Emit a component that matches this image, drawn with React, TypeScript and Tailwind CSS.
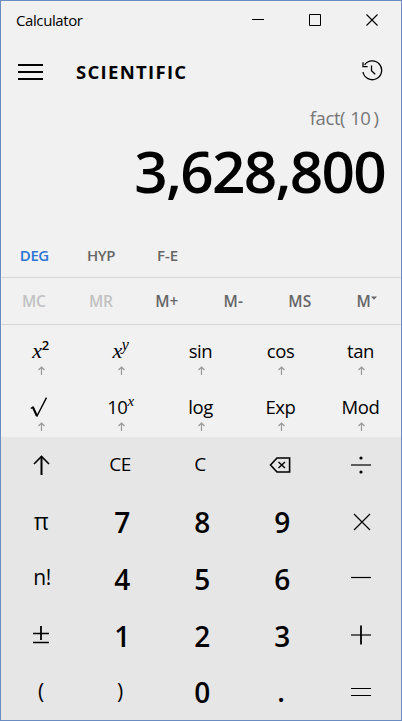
import React from "react";

type IconProps = { children: React.ReactNode; w?: number; h?: number; sw?: number; className?: string };

function Icon({ children, w = 24, h = 24, sw = 1.2, className = "" }: IconProps) {
  return (
    <svg width={w} height={h} viewBox={`0 0 ${w} ${h}`} fill="none" stroke="currentColor" strokeWidth={sw} className={`block shrink-0 ${className}`}>
      {children}
    </svg>
  );
}

function Key({ children, className = "" }: { children: React.ReactNode; className?: string }) {
  return (
    <button className={`flex h-full w-full items-center justify-center whitespace-nowrap ${className}`}>
      {children}
    </button>
  );
}

function FnKey({ children }: { children: React.ReactNode }) {
  return (
    <button className="flex h-full w-full flex-col items-center">
      <span className="flex h-[38px] w-full items-center justify-center pr-[1px] pt-[14px] text-[18.5px] leading-none tracking-[-0.4px]">
        {children}
      </span>
      <Icon w={8} h={9} sw={1.2} className="mt-[3px] text-[#999]">
        <path d="M4.5 9V1M1.5 4 4.5 1 7.5 4" />
      </Icon>
    </button>
  );
}

function Digit({ children }: { children: string }) {
  return <Key className="pl-[2px] pt-[1px] text-[28px] font-semibold">{children}</Key>;
}

const serif = "font-['Liberation_Serif',serif] italic";

export default function App() {
  return (
    <div className="flex h-[721px] w-[402px] flex-col overflow-hidden border border-[#6a8cc0] bg-[#f1f1f1] font-['Open_Sans',sans-serif] text-black">
      <div className="flex h-[38px] shrink-0 items-center justify-between pl-[15px]">
        <span className="pt-[1px] text-[15px] tracking-[-0.4px]">Calculator</span>
        <div className="flex">
          <Icon w={57} h={38} sw={1}><path d="M22 18.5h12" /></Icon>
          <Icon w={57} h={38} sw={1}><path d="M22.5 13.5h11v11h-11z" /></Icon>
          <Icon w={57} h={38} sw={1.1}><path d="m22.5 13.5 11 11m0-11-11 11" /></Icon>
        </div>
      </div>

      <div className="flex h-[66px] shrink-0 items-center pl-[17px] pr-[18px]">
        <Icon w={25} h={18} sw={2}><path d="M0 2h25M0 9h25M0 16h25" /></Icon>
        <h1 className="ml-[33px] text-[18.5px] font-bold tracking-[1.3px]">SCIENTIFIC</h1>
        <Icon w={22} h={22} sw={1.3} className="-mt-[4px] ml-auto">
          <path d="M2 13A9.4 9.4 0 1 0 3.6 5.8M2 3.2v4.4h4.6M10.5 6.5v5.3l3.7 3.4" />
        </Icon>
      </div>

      <div className="flex h-[131px] shrink-0 flex-col items-end">
        <div className="mr-[22px] text-[18.5px] leading-[26px] text-[#767676]">
          <span className="tracking-[-0.4px]">fact(</span>
          <span className="ml-[5px] tracking-[-0.4px]">10</span>
          <span className="ml-[3px]">)</span>
        </div>
        <div className="mr-[16px] text-[58.5px] font-semibold leading-[78px] tracking-[-1.7px]">3,628,800</div>
      </div>

      <div className="grid h-[41px] shrink-0 grid-cols-6 pb-[2px] text-[15px] font-semibold text-[#666]">
        <Key className="tracking-[-0.4px] text-[#2b74d4]">DEG</Key>
        <Key className="tracking-[-0.4px]">HYP</Key>
        <Key>F-E</Key>
      </div>

      <div className="grid h-[48px] shrink-0 grid-cols-6 border-y border-[#d6d6d6] pr-[1px] pt-[2px] text-[15.5px] font-semibold text-[#666]">
        <Key className="pr-[1px] tracking-[-0.3px] text-[#c2c2c2]">MC</Key>
        <Key className="tracking-[-0.3px] text-[#c2c2c2]">MR</Key>
        <Key className="pr-[1px]">M+</Key>
        <Key className="pr-[1px]">M-</Key>
        <Key className="pr-[1px]">MS</Key>
        <Key>M<Icon w={6} h={4} className="mb-[9px]"><path d="M0 .5h6L3 3.8z" fill="currentColor" stroke="none" /></Icon></Key>
      </div>

      <div className="grid h-[112px] shrink-0 grid-cols-5 grid-rows-2">
        <FnKey><span className={`${serif} text-[22px]`}>x</span><span className="mb-[12px] text-[13px] font-semibold">2</span></FnKey>
        <FnKey><span className={`${serif} text-[22px]`}>x</span><span className={`${serif} mb-[13px] text-[16px]`}>y</span></FnKey>
        <FnKey>sin</FnKey>
        <FnKey>cos</FnKey>
        <FnKey>tan</FnKey>
        <FnKey><Icon w={18} h={20} sw={1.4} className="mr-[3px]"><path d="M.8 11.5 3 10l4 9L16.5.6" /><path d="m3 10.5 3.7 8" strokeWidth={2} /></Icon></FnKey>
        <FnKey>10<span className={`${serif} mb-[11px] text-[15px]`}>x</span></FnKey>
        <FnKey>log</FnKey>
        <FnKey>Exp</FnKey>
        <FnKey>Mod</FnKey>
      </div>

      <div className="grid h-[283px] shrink-0 grid-cols-5 grid-rows-5 bg-[#e6e6e6] text-[19px] tracking-[-0.4px]">
        <Key><Icon w={18} h={20} sw={2}><path d="M9.5 20V1.5" /><path d="M2 9 9.5 1.5 17 9" strokeWidth={1.6} /></Icon></Key>
        <Key className="pb-[3px] pr-[2px]">CE</Key>
        <Key className="pb-[3px] pr-[2px]">C</Key>
        <Key className="pr-[3px]"><Icon w={22} h={16} sw={1.6}><path d="M8 1h12.6v14H8L1.5 8z" /><path d="m9.5 5 6.5 6m0-6-6.5 6" strokeWidth={1.4} /></Icon></Key>
        <Key className="pb-[1px]"><Icon w={20} h={18}><path d="M0 9h20" /><circle cx="10" cy="2" r="1.6" fill="currentColor" stroke="none" /><circle cx="10" cy="16" r="1.6" fill="currentColor" stroke="none" /></Icon></Key>

        <Key className="pb-[2px] text-[23px]">π</Key>
        <Digit>7</Digit>
        <Digit>8</Digit>
        <Digit>9</Digit>
        <Key className="pl-[2px]"><Icon w={18} h={18}><path d="m1 1 16 16m0-16L1 17" /></Icon></Key>

        <Key className="pb-[1px] pl-[2px] text-[21px]">n!</Key>
        <Digit>4</Digit>
        <Digit>5</Digit>
        <Digit>6</Digit>
        <Key><Icon w={20} h={18}><path d="M0 8.5h20" /></Icon></Key>

        <Key><Icon w={16} h={18} sw={1.3}><path d="M0 7.5h16M0 16.5h16" /><path d="M8 0v14" strokeWidth={1.8} /></Icon></Key>
        <Digit>1</Digit>
        <Digit>2</Digit>
        <Digit>3</Digit>
        <Key><Icon w={20} h={20}><path d="M0 10h20" /><path d="M10 .5v19" strokeWidth={1.8} /></Icon></Key>

        <Key className="text-[21px]">(</Key>
        <Key className="pr-[2px] text-[21px]">)</Key>
        <Digit>0</Digit>
        <Key className="pb-[1px] text-[28px] font-semibold">.</Key>
        <Key><Icon w={20} h={12}><path d="M0 2.5h20M0 9.5h20" /></Icon></Key>
      </div>
    </div>
  );
}
